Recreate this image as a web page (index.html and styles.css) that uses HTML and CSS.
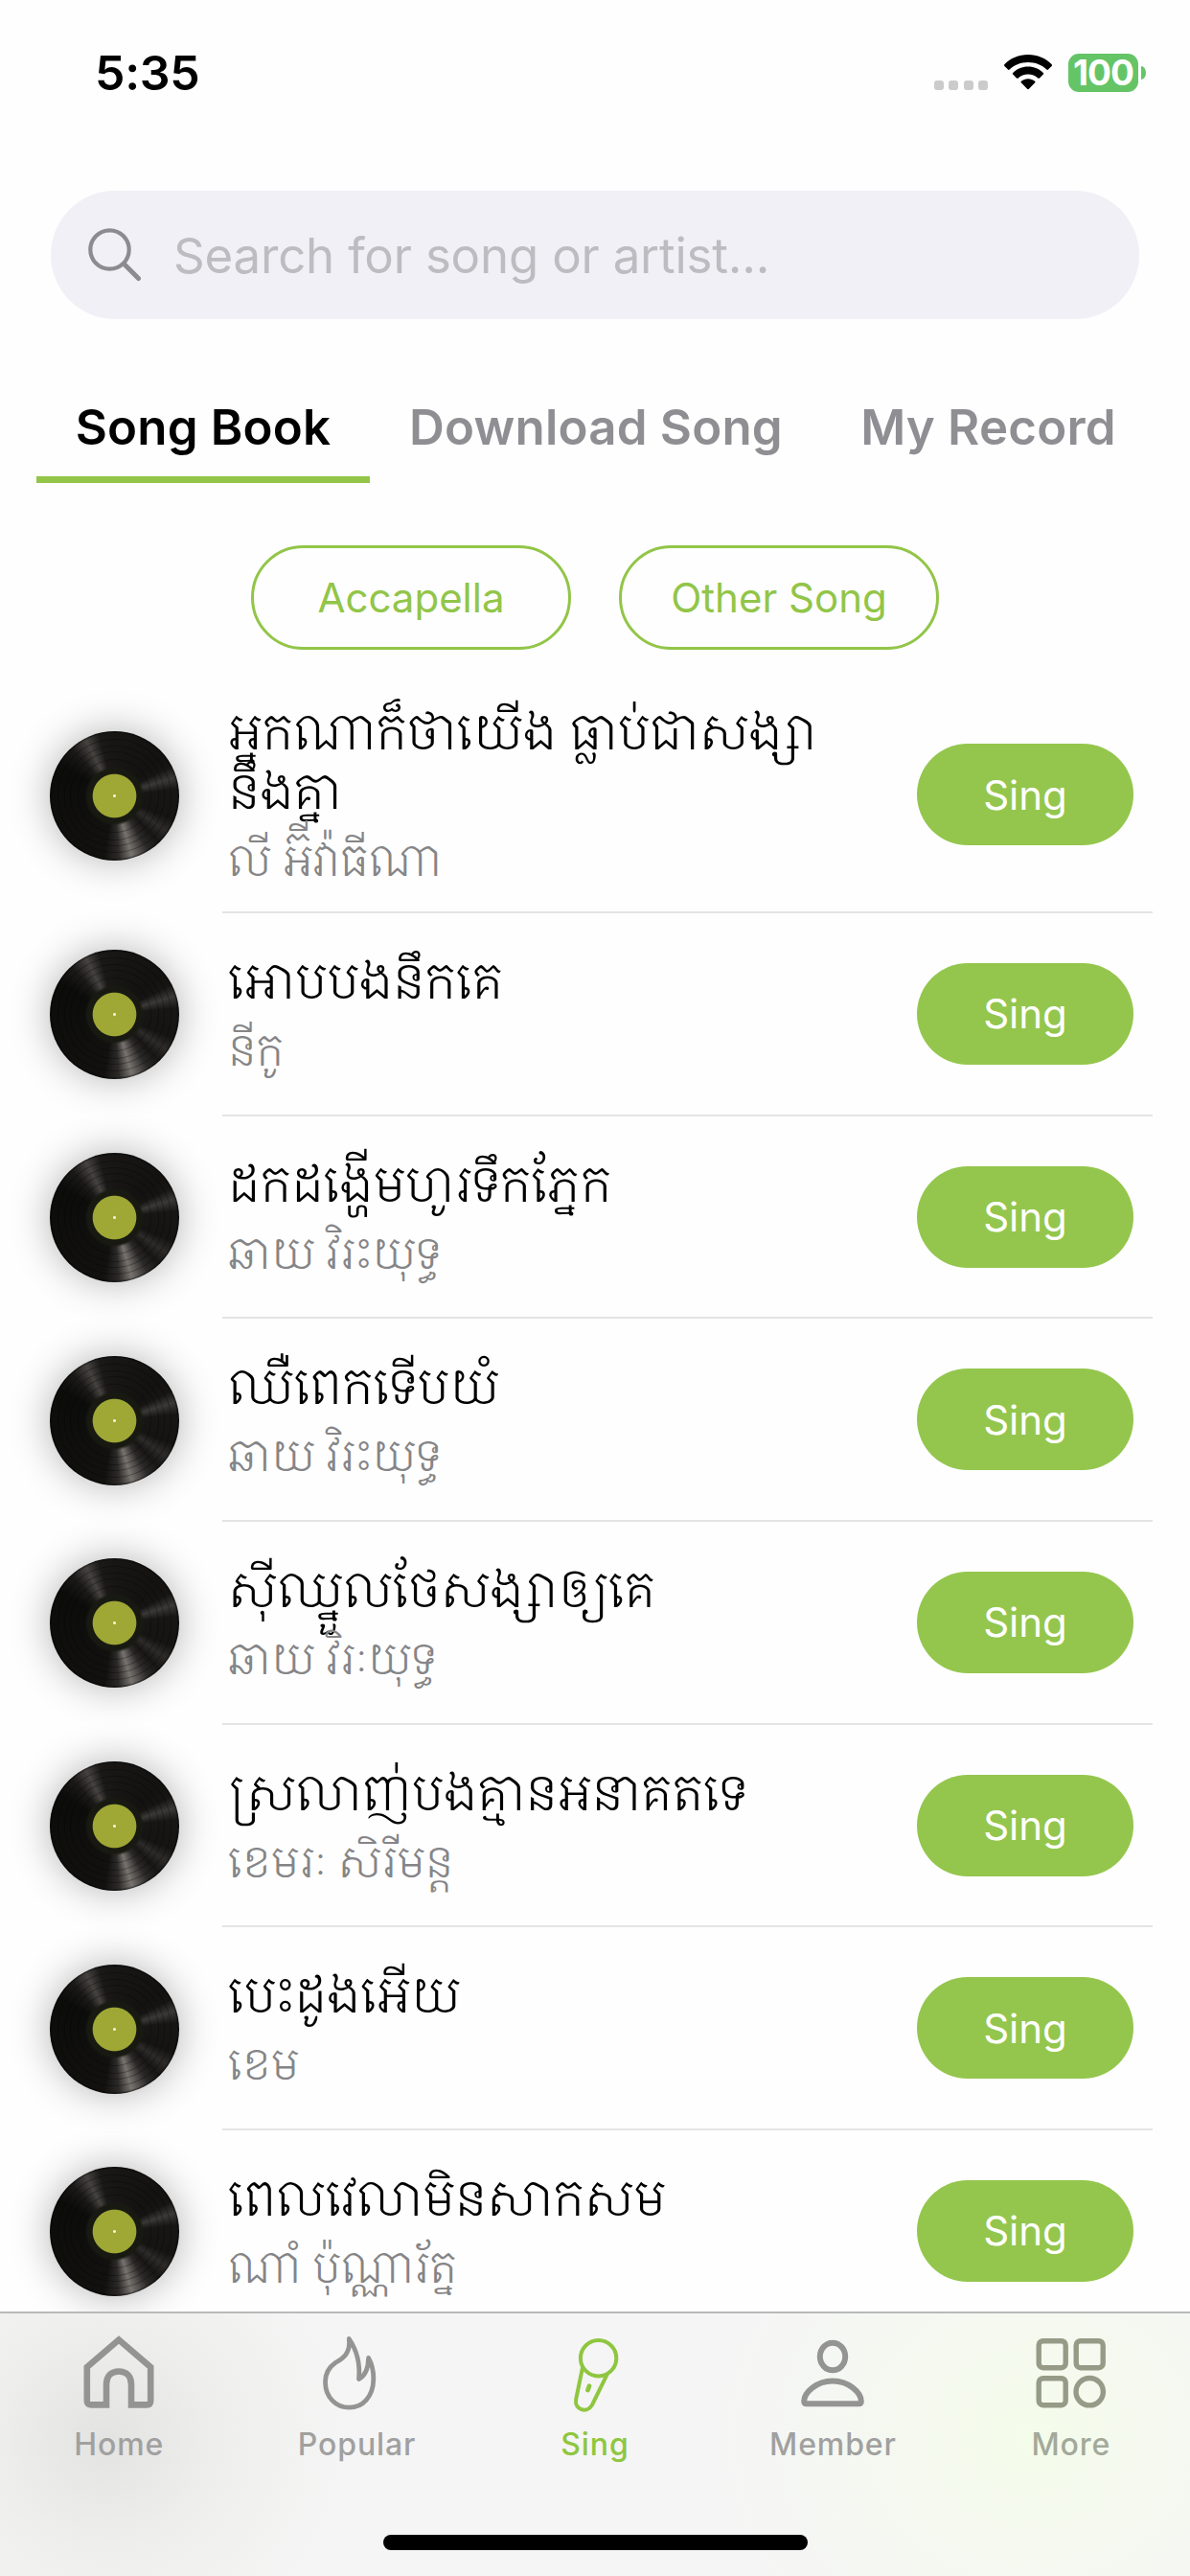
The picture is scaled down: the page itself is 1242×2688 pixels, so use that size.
FILE: index.html
```html
<!DOCTYPE html>
<html lang="km">
<head>
<meta charset="utf-8">
<title>Song Book</title>
<link rel="stylesheet" href="styles.css">
</head>
<body>
<div class="screen">
  <header class="status">
    <span class="time">5:35</span>
    <div class="status-icons">
      <div class="dots"><i></i><i></i><i></i><i></i></div>
      <svg class="wifi" viewBox="0 0 50 37" width="50" height="37">
        <path d="M25 0C34.8 0 43.300 3.800 49.500 10 50.200 10.700 50.200 11.300 49.600 11.900L46 15.500C45.500 16 44.900 16 44.300 15.500 39.200 10.700 32.500 8 25 8 17.500 8 10.800 10.700 5.700 15.500 5.100 16 4.500 16 4 15.500L.4 11.900C-.2 11.300-.2 10.700.5 10 6.700 3.800 15.200 0 25 0Z"/>
        <path d="M25 12.600C31.300 12.600 36.700 15 40.800 18.900 41.400 19.500 41.400 20 40.900 20.600L37 24.400C36.400 25 35.900 24.900 35.300 24.400 32.500 22 29 20.600 25 20.600 21 20.600 17.500 22 14.700 24.400 14.100 24.900 13.600 25 13 24.400L9.100 20.600C8.600 20 8.600 19.500 9.200 18.900 13.300 15 18.700 12.600 25 12.600Z"/>
        <path d="M25 25.200C27.800 25.200 30.200 26.100 32.100 27.700 32.700 28.200 32.700 28.800 32.200 29.300L25.900 35.700C25.300 36.300 24.700 36.300 24.100 35.700L17.800 29.300C17.300 28.800 17.300 28.200 17.900 27.700 19.800 26.100 22.200 25.200 25 25.200Z"/>
      </svg>
      <div class="battery"><span>100</span></div>
      <i class="nub"></i>
    </div>
  </header>

  <div class="search">
    <svg viewBox="0 0 56 56" width="56" height="56" fill="none" stroke="#8b8b90" stroke-linecap="round">
      <circle cx="22.500" cy="22.500" r="20.200" stroke-width="4.200"/>
      <path d="M37.500 37.500 52.500 52.500" stroke-width="5"/>
    </svg>
    <span>Search for song or artist...</span>
  </div>

  <nav class="tabs">
    <a class="tab tab-book active"><span>Song Book</span></a>
    <a class="tab tab-download"><span>Download Song</span></a>
    <a class="tab tab-record"><span>My Record</span></a>
  </nav>

  <div class="pills">
    <button class="pill">Accapella</button>
    <button class="pill">Other Song</button>
  </div>

  <main class="list">
    <article class="row tall">
      <div class="disc"></div>
      <div class="info"><div class="text"><h2>អ្នកណាក៏ថាយើង ធ្លាប់ជាសង្សា<br>នឹងគ្នា</h2><p>លី អ&zwnj;៊ីវ៉ាធីណា</p></div><button class="sing">Sing</button></div>
    </article>
    <article class="row">
      <div class="disc"></div>
      <div class="info"><div class="text"><h2>អោបបងនឹកគេ</h2><p>នីកូ</p></div><button class="sing">Sing</button></div>
    </article>
    <article class="row">
      <div class="disc"></div>
      <div class="info"><div class="text"><h2>ដកដង្ហើមហូរទឹកភ្នែក</h2><p>ឆាយ វិរះយុទ្ធ</p></div><button class="sing">Sing</button></div>
    </article>
    <article class="row">
      <div class="disc"></div>
      <div class="info"><div class="text"><h2>ឈឺពេកទើបយំ</h2><p>ឆាយ វិរះយុទ្ធ</p></div><button class="sing">Sing</button></div>
    </article>
    <article class="row">
      <div class="disc"></div>
      <div class="info"><div class="text"><h2>ស៊ីឈ្នួលថែសង្សាឲ្យគេ</h2><p>ឆាយ វិរៈយុទ្ធ</p></div><button class="sing">Sing</button></div>
    </article>
    <article class="row">
      <div class="disc"></div>
      <div class="info"><div class="text"><h2>ស្រលាញ់បងគ្មានអនាគតទេ</h2><p>ខេមរៈ សិរីមន្ត</p></div><button class="sing">Sing</button></div>
    </article>
    <article class="row">
      <div class="disc"></div>
      <div class="info"><div class="text"><h2>បេះដូងអើយ</h2><p>ខេម</p></div><button class="sing">Sing</button></div>
    </article>
    <article class="row">
      <div class="disc"></div>
      <div class="info"><div class="text"><h2>ពេលវេលាមិនសាកសម</h2><p>ណាំ ប៉ុណ្ណារ័ត្ន</p></div><button class="sing">Sing</button></div>
    </article>
  </main>

  <footer class="tabbar">
    <nav class="tabbar-items">
      <a class="item">
        <svg viewBox="0 0 80 80" width="80" height="80" fill="none" stroke="currentColor" stroke-width="6.600">
          <path d="M30.500 74.400H14.500C11.500 74.400 10.300 73 10.300 70V35L43.500 6.600 76.700 35V70C76.700 73 75.500 74.400 72.500 74.400H56.500V53C56.500 44.500 51.500 39.500 43.500 39.500S30.500 44.500 30.500 53Z" transform="translate(-3.500 0)"/>
        </svg>
        <span>Home</span>
      </a>
      <a class="item">
        <svg viewBox="2 1 80 80" width="80" height="80" fill="none" stroke="currentColor" stroke-width="4.800" stroke-linejoin="round">
          <path d="M33.300 6.500C40.800 17.500 45.300 30 43.500 48.500 49.500 45.500 53.300 38 53.600 26.500 57.500 33.500 59 40.500 58.800 49 58.400 67 47.500 78.200 33.600 78.200 19.600 78.200 8.500 67.500 8.500 51.500 8.500 42.500 12.500 36 19 31.500 28 26.500 35 21 33.300 6.500Z"/>
        </svg>
        <span>Popular</span>
      </a>
      <a class="item on">
        <svg viewBox="0 0 80 80" width="80" height="80" fill="none" stroke="currentColor" stroke-width="4" stroke-linecap="round">
          <circle cx="43.600" cy="25.700" r="18.700"/>
          <path d="M27 35.500 20.200 68.500C18.200 79.500 31.500 84 37 74.500L52.500 42.800"/>
          <path d="M34 54.800 32.500 59" stroke-width="4.800"/>
        </svg>
        <span>Sing</span>
      </a>
      <a class="item">
        <svg viewBox="0 0 80 80" width="80" height="80" fill="none" stroke="currentColor" stroke-width="6" stroke-linejoin="round">
          <ellipse cx="40" cy="24" rx="13.200" ry="14.300"/>
          <path d="M40 49.500C57 49.500 69.500 61.500 69.800 70.500 69.800 72.500 69.100 73.300 67.500 73.300H12.500C10.900 73.300 10.200 72.500 10.200 70.500 10.500 61.500 23 49.500 40 49.500Z"/>
        </svg>
        <span>Member</span>
      </a>
      <a class="item more">
        <svg viewBox="0 0 80 80" width="80" height="80" fill="none" stroke="currentColor" stroke-width="5.400">
          <rect x="6.200" y="7.700" width="28" height="28" rx="4.500"/>
          <rect x="45.200" y="7.700" width="28" height="28" rx="4.500"/>
          <rect x="6.200" y="46.700" width="28" height="28" rx="4.500"/>
          <circle cx="59.200" cy="60.700" r="14.200"/>
        </svg>
        <span>More</span>
      </a>
    </nav>
    <div class="home-bar"></div>
  </footer>
</div>
</body>
</html>
```
FILE: styles.css
```css
* { box-sizing: border-box; }

body {
  margin: 0;
  background: #fefefe;
  font-family: Inter, "Noto Serif Khmer", sans-serif;
  color: #000;
}

button {
  font: inherit;
  border: 0;
  padding: 0;
}

.screen {
  width: 1242px;
  height: 2688px;
  overflow: hidden;
  position: relative;
}

/* Status bar */
.status {
  height: 199px;
  padding: 45px 46px 0 99px;
  display: flex;
  justify-content: space-between;
  align-items: flex-start;
}

.time {
  font-size: 50px;
  line-height: 62px;
  font-weight: 600;
  letter-spacing: -0.300px;
}

.status-icons {
  display: flex;
  align-items: flex-start;
  padding-top: 11px;
}

.dots {
  display: flex;
  gap: 5.500px;
  padding-top: 28px;
  margin-right: 17px;
}

.dots i {
  width: 10px;
  height: 10px;
  border-radius: 3px;
  background: #cbcbcb;
}

.wifi { margin: 1px 17px 0 0; }

.battery {
  width: 73px;
  height: 40px;
  border-radius: 11px;
  background: #65c466;
  color: #fff;
  font-size: 37px;
  font-weight: 700;
  line-height: 40px;
  text-align: center;
  letter-spacing: -1px;
}

.nub {
  width: 5px;
  height: 14px;
  margin: 13px 0 0 3px;
  background: #65c466;
  border-radius: 0 5px 5px 0 / 0 7px 7px 0;
}

/* Search */
.search {
  width: 1136px;
  height: 134px;
  margin-left: 53px;
  padding-left: 39px;
  border-radius: 67px;
  background: #f1f0f6;
  display: flex;
  align-items: center;
  gap: 33px;
}

.search span {
  font-size: 51px;
  color: #bcbcc1;
  letter-spacing: -0.200px;
}

/* Tabs */
.tabs {
  display: flex;
  height: 90px;
  margin: 81px 0 0 38px;
}

.tab {
  display: flex;
  justify-content: center;
  border-bottom: 7px solid transparent;
  font-size: 51px;
  line-height: 64px;
  font-weight: 600;
  letter-spacing: 0.200px;
  color: #8e8e93;
  white-space: nowrap;
}

.tab-book { width: 348px; }
.tab-download { width: 472px; }
.tab-record { width: 347px; }

.tab.active {
  color: #000;
  border-color: #92c548;
}

/* Category pills */
.pills {
  display: flex;
  justify-content: center;
  gap: 50px;
  margin-top: 65px;
}

.pill {
  width: 334px;
  height: 109px;
  border: 3px solid #92c548;
  border-radius: 55px;
  background: transparent;
  color: #92c548;
  font-size: 42px;
}

/* Songs */
.list { margin-top: 29px; }

.row {
  display: flex;
  align-items: center;
  height: 211.700px;
  padding-left: 52px;
}

.row.tall { height: 246px; }

.disc {
  flex: none;
  width: 135px;
  height: 135px;
  margin-right: 45px;
  border-radius: 50%;
  background:
    radial-gradient(circle, #eef6d0 0 1px, #9fa735 2px 22.300px, #181a12 23.300px 28px, transparent 31px),
    radial-gradient(circle, transparent 37px, rgba(0, 0, 0, .3) 38px, transparent 39px 45px, rgba(0, 0, 0, .3) 46px, transparent 47px 51px, rgba(0, 0, 0, .3) 52px, transparent 53px 58px, rgba(0, 0, 0, .3) 59px, transparent 60px 65px, rgba(0, 0, 0, .5) 67px),
    conic-gradient(#171615 0deg, #131211 50deg, #161514 62deg, #3b3936 73deg, #171615 84deg, #151413 112deg, #2d2b29 124deg, #171615 136deg, #2b2928 148deg, #77736f 164deg, #2c2a28 176deg, #121110 190deg, #0c0c0b 300deg, #1a1918 318deg, #45423f 333deg, #1a1918 346deg, #171615 360deg);
  box-shadow: 0 0 42px rgba(0, 0, 0, .3);
}

.info {
  flex: 1;
  height: 100%;
  margin-right: 39px;
  padding-right: 20px;
  border-bottom: 2px solid #e4e4e5;
  display: flex;
  align-items: center;
  justify-content: space-between;
}

.text {
  padding-left: 6px;
  font-family: "Noto Serif Khmer", "Noto Sans", serif;
  white-space: nowrap;
}

.text h2 {
  margin: 0;
  font-size: 51.500px;
  line-height: 62px;
  font-weight: 330;
}

.text p {
  margin: 10px 0 0;
  font-size: 45.500px;
  line-height: 62px;
  font-weight: 310;
  color: #858587;
}

.sing {
  width: 226px;
  height: 106px;
  border-radius: 53px;
  background: #94c64d;
  color: #fff;
  font-size: 42px;
}

/* Bottom bar */
.tabbar {
  position: absolute;
  left: 0;
  bottom: 0;
  width: 100%;
  height: 276px;
  border-top: 2px solid #b9b9b9;
  background:
    radial-gradient(ellipse 250px 240px at 110px 130px, #e3e3e1 0, rgba(236, 236, 234, .7) 50%, rgba(245, 245, 245, 0) 100%),
    radial-gradient(ellipse 330px 290px at 1075px 130px, #f4fcea 0, rgba(245, 250, 238, .7) 45%, rgba(245, 245, 245, 0) 100%),
    #f5f5f5;
  display: flex;
  flex-direction: column;
  align-items: center;
}

.tabbar-items {
  display: flex;
  width: 100%;
  height: 231px;
  padding-top: 21px;
}

.item {
  flex: 1;
  display: flex;
  flex-direction: column;
  align-items: center;
  gap: 16px;
  color: #949493;
}

.item svg { overflow: visible; }

.item span {
  font-size: 32px;
  line-height: 40px;
  font-weight: 500;
  letter-spacing: 0.900px;
  color: #a0a09f;
}

.item.on, .item.on span { color: #8fc640; }
.item.more { color: #959b87; }
.item.more span { color: #a3a99a; }

.home-bar {
  width: 443px;
  height: 16px;
  border-radius: 8px;
  background: #000;
}
```
